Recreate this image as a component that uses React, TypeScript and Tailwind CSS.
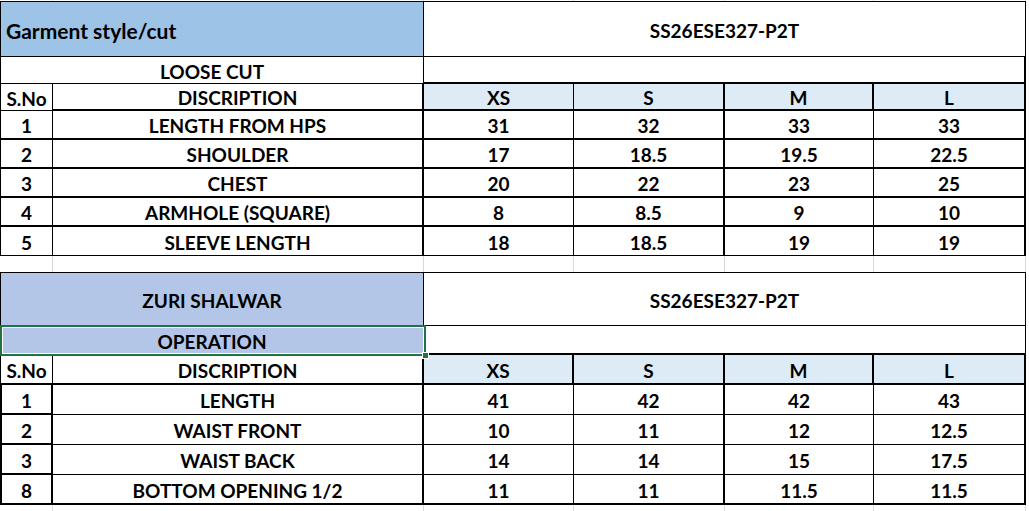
import React from 'react'

type Row = [number, string, number, number, number, number]

const SIZES = ['XS', 'S', 'M', 'L']

const TOP_ROWS: Row[] = [
  [1, 'LENGTH FROM HPS', 31, 32, 33, 33],
  [2, 'SHOULDER', 17, 18.5, 19.5, 22.5],
  [3, 'CHEST', 20, 22, 23, 25],
  [4, 'ARMHOLE (SQUARE)', 8, 8.5, 9, 10],
  [5, 'SLEEVE LENGTH', 18, 18.5, 19, 19],
]

const SHALWAR_ROWS: Row[] = [
  [1, 'LENGTH', 41, 42, 42, 43],
  [2, 'WAIST FRONT', 10, 11, 12, 12.5],
  [3, 'WAIST BACK', 14, 14, 15, 17.5],
  [8, 'BOTTOM OPENING 1/2', 11, 11, 11.5, 11.5],
]

function Cell({ className = '', children }: { className?: string; children?: React.ReactNode }) {
  return (
    <div className={`flex items-center justify-center border-black pt-[2px] leading-none ${className}`}>
      {children}
    </div>
  )
}

function GridGap({ height }: { height: string }) {
  return (
    <div className={`grid grid-cols-[53px_371px_150px_151px_149px_152px] ${height}`}>
      {[0, 1, 2, 3, 4, 5].map(i => (
        <div key={i} className="border-r border-[#dadada]" />
      ))}
    </div>
  )
}

function TopTable() {
  return (
    <div className="grid grid-cols-[53px_371px_150px_151px_149px_152px] grid-rows-[56px_27px_27px_29px_29px_29px_29px_29px]">
      <div className="col-span-2 flex items-center border-t border-l border-r border-b border-black bg-[#9dc3e6] pl-[5px] pt-[3px] text-[21px] leading-none">
        Garment style/cut
      </div>
      <Cell className="col-span-4 border-t border-r border-b">SS26ESE327-P2T</Cell>

      <Cell className="col-span-2 border-l border-r border-b">LOOSE CUT</Cell>
      <Cell className="col-span-4 border-r-2 border-b-2" />

      <Cell className="border-l border-r border-b">S.No</Cell>
      <Cell className="border-r-2 border-b-2">DISCRIPTION</Cell>
      {SIZES.map((s, i) => (
        <Cell key={s} className={`bg-[#ddebf7] border-b-2 ${i === 0 ? 'border-r' : 'border-r-2'}`}>
          {s}
        </Cell>
      ))}

      {TOP_ROWS.map((row, ri) => {
        const b = ri === TOP_ROWS.length - 1 ? 'border-b' : 'border-b-2'
        return (
          <React.Fragment key={ri}>
            <Cell className={`border-l border-r ${b}`}>{row[0]}</Cell>
            <Cell className={`border-r-2 ${b}`}>{row[1]}</Cell>
            <Cell className={`border-r ${b}`}>{row[2]}</Cell>
            <Cell className={`border-r-2 ${b}`}>{row[3]}</Cell>
            <Cell className={`border-r ${b}`}>{row[4]}</Cell>
            <Cell className={`border-r-2 ${b}`}>{row[5]}</Cell>
          </React.Fragment>
        )
      })}
    </div>
  )
}

function ShalwarTable() {
  return (
    <div className="grid grid-cols-[53px_371px_150px_151px_149px_152px] grid-rows-[54px_29px_30px_30px_30px_30px_30px]">
      <Cell className="col-span-2 border-t border-l border-r border-b bg-[#b4c6e7]">ZURI SHALWAR</Cell>
      <Cell className="col-span-4 border-t border-r border-b">SS26ESE327-P2T</Cell>

      <div className="relative col-span-2 flex items-center justify-center bg-[#b4c6e7] pt-[2px] leading-none">
        OPERATION
        <div className="pointer-events-none absolute -top-px left-0 right-[-2px] bottom-[-1px] border-2 border-[#217346]">
          <div className="h-full w-full border border-white" />
        </div>
        <div className="absolute bottom-[-4px] right-[-5px] h-[7px] w-[7px] border border-white bg-[#217346]" />
      </div>
      <Cell className="col-span-4 border-r border-b-2" />

      <Cell className="border-l border-r border-b-2">S.No</Cell>
      <Cell className="border-r-2 border-b-2">DISCRIPTION</Cell>
      {SIZES.map(s => (
        <Cell key={s} className="bg-[#ddebf7] border-r-2 border-b-2">
          {s}
        </Cell>
      ))}

      {SHALWAR_ROWS.map((row, ri) => {
        const b = ri === SHALWAR_ROWS.length - 1 ? 'border-b-2' : 'border-b'
        return (
          <React.Fragment key={ri}>
            <Cell className="border-l-2 border-r-2 border-b-2">{row[0]}</Cell>
            <Cell className={`border-r-2 ${b}`}>{row[1]}</Cell>
            <Cell className={`border-r ${b}`}>{row[2]}</Cell>
            <Cell className={`border-r-2 ${b}`}>{row[3]}</Cell>
            <Cell className={`border-r ${b}`}>{row[4]}</Cell>
            <Cell className={`border-r-2 ${b}`}>{row[5]}</Cell>
          </React.Fragment>
        )
      })}
    </div>
  )
}

export default function App() {
  return (
    <div className="h-[511px] w-[1029px] overflow-hidden bg-white font-['Lato','Open_Sans',sans-serif] text-[19px] font-bold text-black">
      <GridGap height="h-px" />
      <TopTable />
      <GridGap height="h-[16px]" />
      <ShalwarTable />
      <GridGap height="h-[6px]" />
    </div>
  )
}
